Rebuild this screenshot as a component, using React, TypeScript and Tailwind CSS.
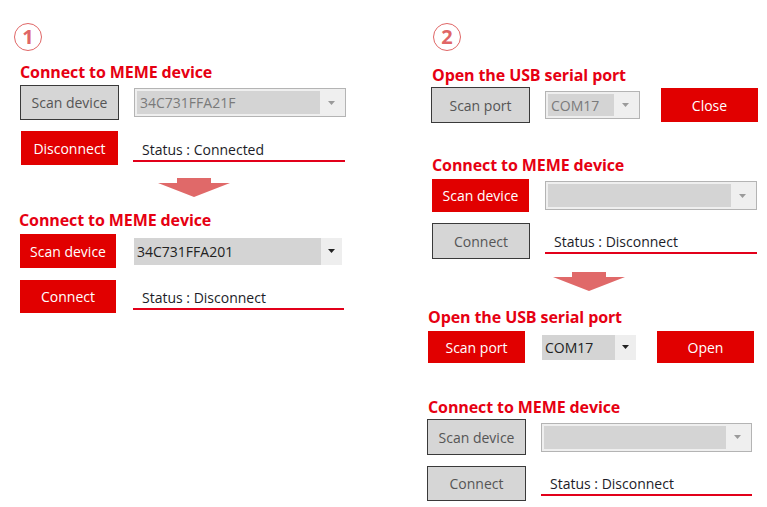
import React from 'react';

const font = { fontFamily: '"Open Sans", "Noto Sans", sans-serif' };

type Tone = 'red' | 'gray';

const Circled: React.FC<{ n: string; className?: string }> = ({ n, className = '' }) => (
  <div
    className={`w-[28px] h-[28px] rounded-full border-[1.5px] border-[#e06666] text-[#e06666] flex items-center justify-center text-[20px] font-bold leading-none ${className}`}
  >
    {n}
  </div>
);

const Heading: React.FC<{ children: React.ReactNode; className?: string }> = ({ children, className = '' }) => (
  <div className={`text-[16px] leading-[20px] font-bold text-[#e60012] tracking-[-0.1px] ${className}`}>{children}</div>
);

const Btn: React.FC<{ tone: Tone; label: string; className?: string }> = ({ tone, label, className = '' }) => (
  <div
    className={`flex items-center justify-center text-[14px] ${
      tone === 'red'
        ? 'bg-[#e10000] text-white'
        : 'bg-[#d6d6d6] text-[#555] border-[1.5px] border-[#3a3a3a]'
    } ${className}`}
  >
    {label}
  </div>
);

const Caret: React.FC<{ dark?: boolean }> = ({ dark }) => (
  <svg width="7" height="4" viewBox="0 0 7 4">
    <path d="M0 0h7L3.5 4z" fill={dark ? '#222' : '#9a9a9a'} />
  </svg>
);

// disabled combo: grey frame, inner grey field, faint caret
const ComboOff: React.FC<{ value?: string; className?: string }> = ({ value = '', className = '' }) => (
  <div className={`flex items-stretch border border-[#b4b4b4] bg-[#efefef] p-[2px] ${className}`}>
    <div className="flex-1 bg-[#d4d4d4] text-[#7a7a7a] text-[14px] flex items-center pl-[3px]">{value}</div>
    <div className="w-[23px] flex items-center justify-center">
      <Caret />
    </div>
  </div>
);

const ComboOn: React.FC<{ value: string; className?: string }> = ({ value, className = '' }) => (
  <div className={`flex items-stretch ${className}`}>
    <div className="flex-1 bg-[#d4d4d4] text-[#222] text-[14px] flex items-center pl-[3px]">{value}</div>
    <div className="w-[21px] bg-[#eeeeee] flex items-center justify-center">
      <Caret dark />
    </div>
  </div>
);

const Status: React.FC<{ text: string; className?: string }> = ({ text, className = '' }) => (
  <div className={`border-b-2 border-[#e2001a] text-[14px] text-[#1c1c28] leading-[18px] pl-[9px] pb-[1px] ${className}`}>
    {text}
  </div>
);

const Arrow: React.FC<{ className?: string }> = ({ className = '' }) => (
  <svg width="72" height="19" viewBox="0 0 72 19" className={className}>
    <path d="M19 0h34v5h19L36 19 0 5h19z" fill="#e06969" />
  </svg>
);

export default function App() {
  return (
    <div className="w-[767px] h-[507px] bg-white flex" style={font}>
      {/* left: step 1 */}
      <div className="w-[408px] flex flex-col pl-[20px]">
        <Circled n="1" className="mt-[23px] -ml-[6px]" />
        <Heading className="mt-[11px]">Connect to MEME device</Heading>
        <div className="mt-[3px] flex items-center">
          <Btn tone="gray" label="Scan device" className="w-[99px] h-[35px]" />
          <ComboOff value="34C731FFA21F" className="ml-[15px] w-[212px] h-[29px]" />
        </div>
        <div className="mt-[11px] flex items-center">
          <Btn tone="red" label="Disconnect" className="w-[97px] h-[34px] ml-px" />
          <Status text="Status : Connected" className="ml-[15px] w-[212px] mt-[6px]" />
        </div>
        <Arrow className="mt-[13px] ml-[138px]" />
        <Heading className="mt-[13px] -ml-px">Connect to MEME device</Heading>
        <div className="mt-[4px] flex items-center">
          <Btn tone="red" label="Scan device" className="w-[96px] h-[34px]" />
          <ComboOn value="34C731FFA201" className="ml-[18px] w-[208px] h-[27px]" />
        </div>
        <div className="mt-[12px] flex items-center">
          <Btn tone="red" label="Connect" className="w-[96px] h-[33px]" />
          <Status text="Status : Disconnect" className="ml-[17px] w-[211px] mt-[6px]" />
        </div>
      </div>

      {/* right: step 2 */}
      <div className="flex-1 flex flex-col pl-[24px]">
        <Circled n="2" className="mt-[23px] ml-px" />
        <Heading className="mt-[14px]">Open the USB serial port</Heading>
        <div className="mt-[2px] flex items-center">
          <Btn tone="gray" label="Scan port" className="w-[99px] h-[36px] -ml-px" />
          <ComboOff value="COM17" className="ml-[15px] w-[95px] h-[28px]" />
          <Btn tone="red" label="Close" className="ml-[21px] w-[97px] h-[34px]" />
        </div>
        <Heading className="mt-[32px]">Connect to MEME device</Heading>
        <div className="mt-[4px] flex items-center">
          <Btn tone="red" label="Scan device" className="w-[97px] h-[33px]" />
          <ComboOff className="ml-[16px] w-[212px] h-[29px]" />
        </div>
        <div className="mt-[11px] flex items-center">
          <Btn tone="gray" label="Connect" className="w-[98px] h-[36px]" />
          <Status text="Status : Disconnect" className="ml-[15px] w-[212px] mt-[4px]" />
        </div>
        <Arrow className="mt-[13px] ml-[121px]" />
        <div className="-ml-[4px] flex flex-col">
          <Heading className="mt-[16px]">Open the USB serial port</Heading>
          <div className="mt-[4px] flex items-center">
            <Btn tone="red" label="Scan port" className="w-[97px] h-[32px]" />
            <ComboOn value="COM17" className="ml-[17px] w-[94px] h-[25px]" />
            <Btn tone="red" label="Open" className="ml-[21px] w-[97px] h-[32px]" />
          </div>
          <Heading className="mt-[34px]">Connect to MEME device</Heading>
          <div className="mt-[2px] flex items-center">
            <Btn tone="gray" label="Scan device" className="w-[99px] h-[36px] -ml-px" />
            <ComboOff className="ml-[15px] w-[211px] h-[29px]" />
          </div>
          <div className="mt-[11px] flex items-center">
            <Btn tone="gray" label="Connect" className="w-[99px] h-[35px] -ml-px" />
            <Status text="Status : Disconnect" className="ml-[15px] w-[211px] mt-[4px]" />
          </div>
        </div>
      </div>
    </div>
  );
}
